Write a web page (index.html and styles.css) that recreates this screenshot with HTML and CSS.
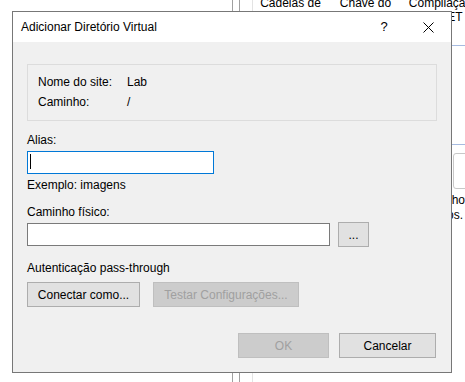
FILE: index.html
```html
<!DOCTYPE html>
<html lang="pt">

<head>
    <meta charset="UTF-8">
    <title>Adicionar Diretório Virtual</title>
    <link rel="stylesheet" href="styles.css">
</head>

<body>
    <!-- janela do gerenciador atrás do diálogo -->
    <div class="mmc">
        <div class="tree"></div>
        <div class="splitter"></div>
        <div class="features">
            <div class="icons">
                <div class="feature">Cadeias de Conexão</div>
                <div class="feature">Chave do Computador</div>
                <div class="feature">Compilação do .NET</div>
            </div>
            <div class="group-line first"></div>
            <div class="group-line second"></div>
            <div class="feature-icon"></div>
            <div class="desc">
                <div>Caminho</div>
                <div class="desc-last">arquivos.</div>
            </div>
        </div>
    </div>

    <!-- diálogo -->
    <div class="dialog">
        <div class="titlebar">
            <span class="title">Adicionar Diretório Virtual</span>
            <span class="caption-btn help">?</span>
            <span class="caption-btn">
                <svg width="11" height="11" viewBox="0 0 11 11">
                    <path d="M0.5 0.5 L10.5 10.5 M10.5 0.5 L0.5 10.5" stroke="#000" stroke-width="1" fill="none" />
                </svg>
            </span>
        </div>
        <div class="content">
            <div class="info">
                <span>Nome do site:</span><span>Lab</span>
                <span>Caminho:</span><span>/</span>
            </div>

            <div class="label">Alias:</div>
            <div class="textbox alias"><span class="caret"></span></div>
            <div class="hint">Exemplo: imagens</div>

            <div class="label">Caminho físico:</div>
            <div class="path-row">
                <div class="textbox path"></div>
                <button class="btn browse">...</button>
            </div>

            <div class="label section">Autenticação pass-through</div>
            <div class="auth-row">
                <button class="btn connect">Conectar como...</button>
                <button class="btn test" disabled>Testar Configurações...</button>
            </div>

            <div class="footer">
                <button class="btn ok" disabled>OK</button>
                <button class="btn cancel">Cancelar</button>
            </div>
        </div>
    </div>
</body>

</html>
```

FILE: styles.css
```css
* {
    margin: 0;
    padding: 0;
    box-sizing: border-box;
}

body {
    width: 465px;
    height: 382px;
    overflow: hidden;
    background-color: #fff;
    font: 12px "Liberation Sans", Arial, sans-serif;
    color: #000;
    position: relative;
}

/* janela de fundo */
.mmc {
    display: flex;
    height: 382px;
}

.tree {
    width: 232px;
    flex: none;
}

.splitter {
    width: 8px;
    flex: none;
    border-left: 1px solid #a0a0a0;
    border-right: 1px solid #a0a0a0;
    margin-right: 12px;
}

.features {
    flex: 1;
    min-width: 0;
    overflow: hidden;
    border-left: 1px solid #e3e3e3;
}

.icons {
    display: flex;
    margin-top: -4px;
    line-height: 14px;
}

.feature {
    flex: none;
    width: 75px;
    text-align: center;
}

.group-line {
    border-top: 1px solid #a6bbe0;
}

.group-line.first {
    margin-top: 21px;
}

.group-line.second {
    margin-top: 98px;
}

.feature-icon {
    width: 40px;
    height: 36px;
    margin: 8px 0 0 200px;
    border: 1px solid #c8c8c8;
    border-radius: 3px;
}

.desc {
    margin-top: 4px;
    line-height: 15px;
    text-align: right;
}

.desc-last {
    padding-right: 2px;
}

/* diálogo */
.dialog {
    position: absolute;
    left: 12px;
    top: 11px;
    width: 440px;
    height: 362px;
    border: 1px solid #777;
    background-color: #f0f0f0;
    display: flex;
    flex-direction: column;
}

.titlebar {
    height: 30px;
    flex: none;
    background-color: #fff;
    display: flex;
    align-items: center;
    line-height: 16px;
}

.title {
    flex: 1;
    padding-left: 8px;
}

.caption-btn {
    width: 46px;
    height: 30px;
    display: flex;
    align-items: center;
    justify-content: center;
}

.caption-btn.help {
    padding-left: 4px;
    font-size: 13px;
}

.content {
    flex: 1;
    display: flex;
    flex-direction: column;
    padding: 22px 14px 14px;
    line-height: 16px;
}

.info {
    display: grid;
    grid-template-columns: 89px auto;
    justify-content: start;
    row-gap: 4px;
    padding: 9px 10px 10px;
    border: 1px solid #dcdcdc;
}

.label {
    margin-top: 11px;
}

.label.section {
    margin-top: 13px;
}

.textbox {
    height: 23px;
    border: 1px solid #7a7a7a;
    background-color: #fff;
}

.alias {
    width: 187px;
    margin-top: 3px;
    padding: 2px 0 0 2px;
    border-color: #0078d7;
}

.caret {
    display: block;
    width: 1px;
    height: 15px;
    background-color: #000;
}

.hint {
    margin-top: 3px;
}

.path-row {
    display: flex;
    align-items: center;
    gap: 8px;
    margin-top: 2px;
}

.path {
    width: 303px;
}

.btn {
    height: 25px;
    border: 1px solid #adadad;
    background-color: #e1e1e1;
    font: inherit;
    line-height: 16px;
    color: #000;
}

.btn:disabled {
    border-color: #bfbfbf;
    background-color: #ccc;
    color: #a0a0a0;
}

.browse {
    width: 31px;
}

.auth-row {
    display: flex;
    gap: 13px;
    margin-top: 6px;
}

.connect {
    width: 113px;
}

.test {
    width: 146px;
}

.footer {
    margin-top: auto;
    margin-right: 1px;
    display: flex;
    justify-content: flex-end;
    gap: 10px;
}

.ok {
    width: 91px;
}

.cancel {
    width: 97px;
}
```
